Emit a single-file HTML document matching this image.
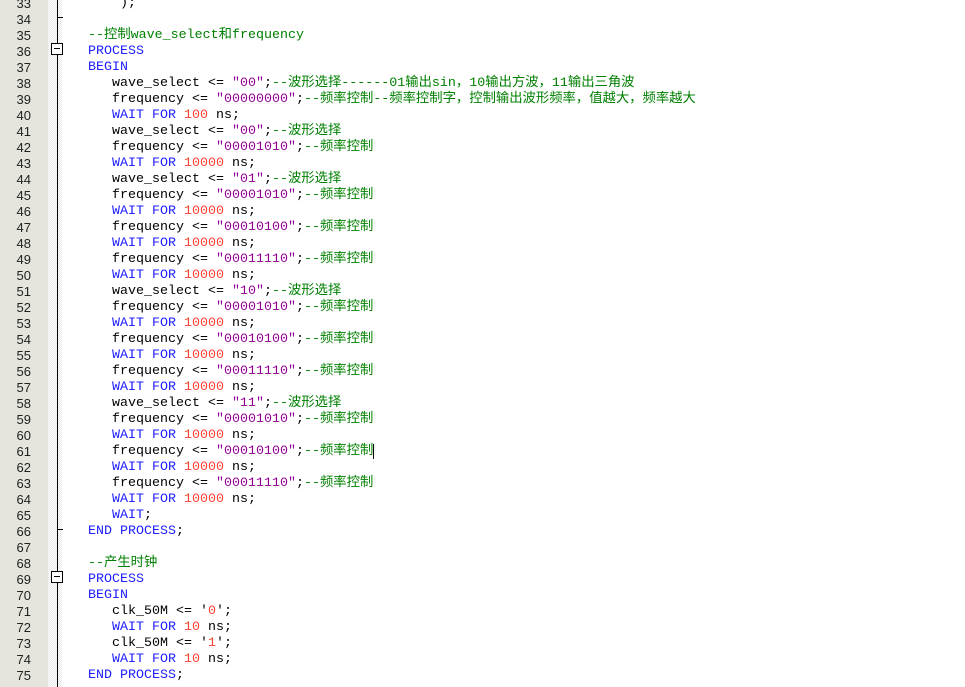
<!DOCTYPE html><html><head><style>
body{margin:0;width:965px;height:687px;overflow:hidden;background:#fff;position:relative}
#g{position:absolute;left:0;top:0;width:48px;height:687px;background:#e5e5dd}
#d{position:absolute;left:48px;top:0;width:14px;height:687px;background-image:repeating-conic-gradient(#e8e8e8 0 25%,#fff 0 50%);background-size:2px 2px}
.n{position:absolute;left:0;width:31px;text-align:right;font:13px "Liberation Sans",sans-serif;color:#222;line-height:16px}
.l{position:absolute;left:88px;white-space:pre;font:13.33px "Liberation Mono","Noto Sans CJK SC",monospace;line-height:16px;color:#000}
.k{color:#2020ff}.s{color:#900090}.m{color:#ff4030}.c{color:#008000}
.v{position:absolute;left:57px;width:1px;background:#000}
.b{position:absolute;left:51px;width:10px;height:10px;border:1px solid #000;background:#fff}
.b:after{content:"";position:absolute;left:2px;top:4px;width:6px;height:1px;background:#000}
.t{position:absolute;left:57px;width:6px;height:1px;background:#000}
</style></head><body>
<div id="g"></div><div id="d"></div>
<div class="v" style="top:0;height:43px"></div><div class="t" style="top:17px"></div>
<div class="v" style="top:55px;height:571px"></div><div class="t" style="top:529px"></div>
<div class="v" style="top:587px;height:100px"></div>
<div class="b" style="top:43px"></div><div class="b" style="top:571px"></div>
<div id="c"></div>
<script>
const L=[
[33,'    );'],[34,''],
[35,'<span class=c>--控制wave_select和frequency</span>'],
[36,'<span class=k>PROCESS</span>'],[37,'<span class=k>BEGIN</span>'],
[38,'   wave_select &lt;= <span class=s>"00"</span>;<span class=c>--波形选择------01输出sin，10输出方波，11输出三角波</span>'],
[39,'   frequency &lt;= <span class=s>"00000000"</span>;<span class=c>--频率控制--频率控制字，控制输出波形频率，值越大，频率越大</span>'],
[40,'W100'],
[41,'S00'],[42,'F00001010'],[43,'W'],
[44,'S01'],[45,'F00001010'],[46,'W'],[47,'F00010100'],[48,'W'],[49,'F00011110'],[50,'W'],
[51,'S10'],[52,'F00001010'],[53,'W'],[54,'F00010100'],[55,'W'],[56,'F00011110'],[57,'W'],
[58,'S11'],[59,'F00001010'],[60,'W'],[61,'F00010100'],[62,'W'],[63,'F00011110'],[64,'W'],
[65,'   <span class=k>WAIT</span>;'],[66,'<span class=k>END PROCESS</span>;'],[67,''],
[68,'<span class=c>--产生时钟</span>'],[69,'<span class=k>PROCESS</span>'],[70,'<span class=k>BEGIN</span>'],
[71,'   clk_50M &lt;= \'<span class=m>0</span>\';'],[72,'W10'],
[73,'   clk_50M &lt;= \'<span class=m>1</span>\';'],[74,'W10'],[75,'<span class=k>END PROCESS</span>;']];
let h='';
for(const [n,t0] of L){let t=t0;const y=(n-33)*16-4;
if(t[0]=='W'&&!t.startsWith('<')&&t.length<=6&&t!=='')t='   <span class=k>WAIT FOR</span> <span class=m>'+(t.slice(1)||'10000')+'</span> ns;';
else if(t[0]=='S'&&t.length==3)t='   wave_select &lt;= <span class=s>"'+t.slice(1)+'"</span>;<span class=c>--波形选择</span>';
else if(t[0]=='F'&&t.length==9)t='   frequency &lt;= <span class=s>"'+t.slice(1)+'"</span>;<span class=c>--频率控制</span>'+(n==61?'<span style="border-left:1px solid #000"></span>':'');
h+=`<div class=n style="top:${y}px">${n}</div><div class=l style="top:${y}px">${t}</div>`;}
document.getElementById('c').innerHTML=h;
</script></body></html>
